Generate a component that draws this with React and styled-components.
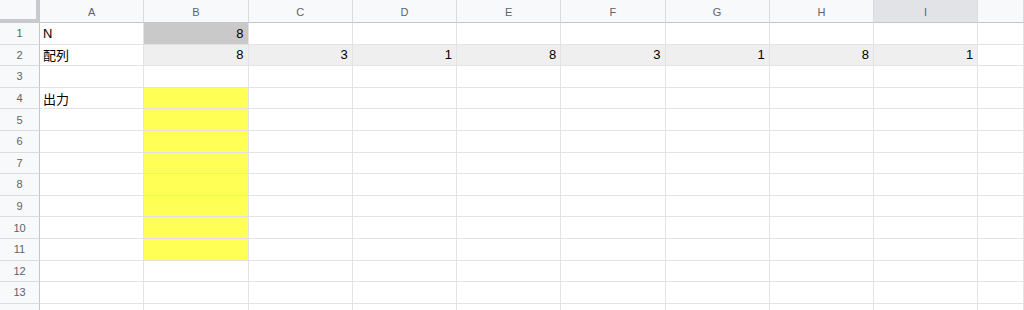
import styled, { createGlobalStyle } from "styled-components";

const GlobalStyle = createGlobalStyle`
  html, body {
    margin: 0;
    padding: 0;
    background: #ffffff;
    overflow: hidden;
  }
`;

const COLS = ["A", "B", "C", "D", "E", "F", "G", "H", "I", ""];
const ROWS = 14;
const LABELLED_ROWS = 13; // row 14 is only a sliver at the bottom edge

// cell contents keyed by "col,row"
const DATA = {
  "A,1": { text: "N" },
  "B,1": { text: "8", num: true, bg: "#c9c9c9" },
  "A,2": { text: "配列" },
  "B,2": { text: "8", num: true, bg: "#efefef" },
  "C,2": { text: "3", num: true, bg: "#efefef" },
  "D,2": { text: "1", num: true, bg: "#efefef" },
  "E,2": { text: "8", num: true, bg: "#efefef" },
  "F,2": { text: "3", num: true, bg: "#efefef" },
  "G,2": { text: "1", num: true, bg: "#efefef" },
  "H,2": { text: "8", num: true, bg: "#efefef" },
  "I,2": { text: "1", num: true, bg: "#efefef" },
  "A,4": { text: "出力" },
};

const Sheet = styled.div`
  display: grid;
  grid-template-columns: 40px repeat(9, 104.25px) 1fr;
  grid-template-rows: 23px repeat(${ROWS}, 21.6px);
  width: 1024px;
  height: 310px;
  overflow: hidden;
  font-family: "Liberation Sans", Arial, "Noto Sans CJK JP", sans-serif;
`;

const Corner = styled.div`
  background: #f8f9fa;
  border-right: 4px solid #c7c9cc;
  border-bottom: 4px solid #c7c9cc;
  box-sizing: border-box;
`;

const ColHead = styled.div`
  display: flex;
  align-items: center;
  justify-content: center;
  background: ${(p) => (p.$active ? "#e1e3e6" : "#f8f9fa")};
  border-right: 1px solid #dadce0;
  border-bottom: 1px solid #c4c7c5;
  box-sizing: border-box;
  color: #5f6368;
  font-size: 11px;
  padding-top: 1px;
`;

const RowHead = styled.div`
  display: flex;
  align-items: center;
  justify-content: center;
  background: #f8f9fa;
  border-right: 1px solid #c4c7c5;
  border-bottom: 1px solid #dadce0;
  box-sizing: border-box;
  color: #5f6368;
  font-size: 11px;
`;

const Cell = styled.div`
  display: flex;
  align-items: center;
  justify-content: ${(p) => (p.$num ? "flex-end" : "flex-start")};
  padding: 0 4px 0 3px;
  background: ${(p) => p.$bg || "#ffffff"};
  border-right: 1px solid #e2e3e3;
  border-bottom: 1px solid #e2e3e3;
  box-sizing: border-box;
  color: #000000;
  font-size: 13px;
  white-space: nowrap;
  overflow: hidden;
`;

const isYellow = (col, row) => col === "B" && row >= 4 && row <= 11;

export default function App() {
  const cells = [];
  cells.push(<Corner key="corner" />);
  COLS.forEach((c, i) =>
    cells.push(
      <ColHead key={"h" + i} $active={c === "I"}>
        {c}
      </ColHead>
    )
  );
  for (let r = 1; r <= ROWS; r++) {
    cells.push(<RowHead key={"r" + r}>{r <= LABELLED_ROWS ? r : null}</RowHead>);
    COLS.forEach((c, i) => {
      const d = DATA[c + "," + r] || {};
      const bg = isYellow(c, r) ? "#ffff55" : d.bg;
      cells.push(
        <Cell key={r + "-" + i} $num={d.num} $bg={bg}>
          {d.text}
        </Cell>
      );
    });
  }
  return (
    <>
      <GlobalStyle />
      <Sheet>{cells}</Sheet>
    </>
  );
}
